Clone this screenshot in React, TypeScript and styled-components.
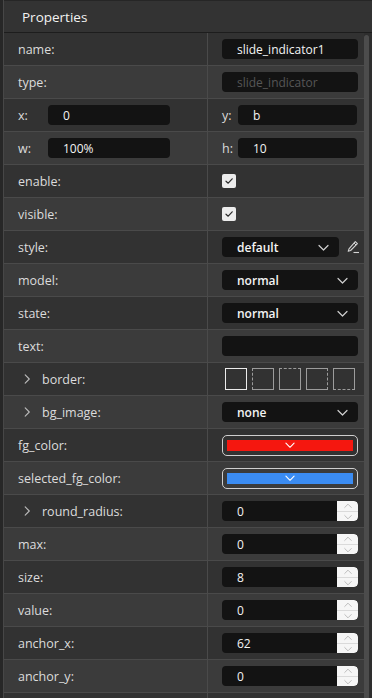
import React from 'react';
import styled, { createGlobalStyle, css } from 'styled-components';

const GlobalStyle = createGlobalStyle`
  html, body {
    margin: 0;
    padding: 0;
    background: #2a2a2a;
  }
  * { box-sizing: border-box; }
`;

const Shell = styled.div`
  display: flex;
  width: 372px;
  height: 698px;
  overflow: hidden;
  font-family: "Open Sans", "Noto Sans", sans-serif;
  font-size: 12.5px;
  color: #dcdcdc;
`;

const LeftEdge = styled.div`
  width: 4px;
  flex: none;
  background: #272727;
  border-right: 1px solid #474747;
`;

const Panel = styled.div`
  flex: 1;
  display: flex;
  flex-direction: column;
  min-width: 0;
`;

const Header = styled.div`
  height: 33px;
  flex: none;
  display: flex;
  align-items: center;
  padding-left: 18px;
  background: #333333;
  border-top: 1px solid #262626;
  border-bottom: 1px solid #1d1d1d;
  font-size: 13.5px;
  color: #f2f2f2;
`;

const Body = styled.div`
  flex: 1;
  display: flex;
  min-height: 0;
`;

const Rows = styled.div`
  flex: 1;
  display: flex;
  flex-direction: column;
`;

const ScrollTrack = styled.div`
  width: 8px;
  flex: none;
  background: #2e2e2e;
  padding: 2px 3px 0 0;
`;

const ScrollThumb = styled.div`
  height: 100%;
  background: #4c4c4c;
  border-radius: 3px 3px 0 0;
`;

const Row = styled.div<{ $alt: boolean }>`
  height: 33px;
  flex: none;
  display: grid;
  grid-template-columns: 204px 1fr;
  background: ${({ $alt }) => ($alt ? '#3b3b3b' : '#323232')};
  border-bottom: 1px solid #4a4a4a;
`;

const LabelCell = styled.div<{ $indent?: boolean }>`
  display: flex;
  align-items: center;
  gap: 0;
  padding-left: ${({ $indent }) => ($indent ? '18px' : '14px')};
  border-right: 1px solid #4a4a4a;
  white-space: nowrap;
`;

const ValueCell = styled.div`
  display: flex;
  align-items: center;
  padding-left: 14px;
`;

const Caret = styled.span`
  display: inline-flex;
  width: 20px;
  color: #bdbdbd;
`;

const InlineLabel = styled.span<{ $w: number }>`
  width: ${({ $w }) => $w}px;
  flex: none;
`;

const inputBox = css`
  height: 20px;
  border-radius: 4px;
  background: #131313;
  display: flex;
  align-items: center;
`;

const TextInput = styled.div<{ $w?: number; $dim?: boolean }>`
  ${inputBox};
  width: ${({ $w }) => ($w ? `${$w}px` : '136px')};
  padding-left: 15px;
  color: ${({ $dim }) => ($dim ? '#565656' : '#f4f4f4')};
  font-size: 12px;
`;

const Select = styled.div<{ $w?: number }>`
  ${inputBox};
  width: ${({ $w }) => ($w ? `${$w}px` : '136px')};
  padding: 0 10px 0 15px;
  justify-content: space-between;
  color: #f4f4f4;
  font-size: 12px;
  font-weight: 600;
`;

const IconButton = styled.span`
  display: inline-flex;
  margin-left: 7px;
  color: #d0d0d0;
`;

const Checkbox = styled.span`
  width: 14px;
  height: 14px;
  border-radius: 2px;
  background: #ececec;
  display: inline-flex;
  align-items: center;
  justify-content: center;
`;

const BorderBoxes = styled.div`
  display: flex;
  gap: 5px;
  margin-left: 3px;
`;

const BorderBox = styled.span<{ $side?: 'left' | 'top' | 'right' | 'bottom'; $active?: boolean }>`
  width: 22px;
  height: 22px;
  border: ${({ $active }) => ($active ? '1.5px solid #ececec' : '1px solid #9c9c9c')};
  ${({ $side }) => $side && `border-${$side}-style: dashed;`}
`;

const ColorButton = styled.div`
  width: 136px;
  height: 21px;
  border: 1px solid #cfcfcf;
  border-radius: 5px;
  padding: 4px;
  display: flex;
`;

const Swatch = styled.div<{ $color: string }>`
  flex: 1;
  background: ${({ $color }) => $color};
  display: flex;
  align-items: center;
  justify-content: center;
`;

const Spin = styled.div`
  ${inputBox};
  width: 136px;
  overflow: hidden;
`;

const SpinValue = styled.span`
  flex: 1;
  padding-left: 15px;
  color: #f4f4f4;
  font-size: 12px;
`;

const SpinButtons = styled.div`
  width: 21px;
  height: 100%;
  background: #f6f6f6;
  display: flex;
  flex-direction: column;
  align-items: center;
  justify-content: center;
  border-radius: 0 4px 4px 0;
  gap: 1px;
`;

const SpinDivider = styled.span`
  width: 100%;
  height: 1px;
  background: #dadada;
`;

function Chevron({ dir = 'down', size = 11, color = '#cfcfcf', sw = 1.2 }: { dir?: 'down' | 'up' | 'right'; size?: number; color?: string; sw?: number }) {
  const d = dir === 'down' ? 'M1 3.5 L5.5 8 L10 3.5' : dir === 'up' ? 'M1 7.5 L5.5 3 L10 7.5' : 'M3.5 1 L8 5.5 L3.5 10';
  return (
    <svg width={size} height={size} viewBox="0 0 11 11" fill="none">
      <path d={d} stroke={color} strokeWidth={sw} strokeLinecap="round" strokeLinejoin="round" />
    </svg>
  );
}

function Check() {
  return (
    <svg width="10" height="10" viewBox="0 0 10 10" fill="none">
      <path d="M2 5.2 L4.2 7.2 L8.2 2.8" stroke="#2a2a2a" strokeWidth="1.2" strokeLinecap="round" strokeLinejoin="round" />
    </svg>
  );
}

function Pencil() {
  return (
    <svg width="14" height="14" viewBox="0 0 14 14" fill="none">
      <path d="M9.3 1.6 L11.4 3.7 L4.6 10.5 L2.2 11.3 L3 8.9 Z" stroke="#d4d4d4" strokeWidth="1.1" strokeLinejoin="round" />
      <path d="M8 3 L10 5" stroke="#d4d4d4" strokeWidth="1" />
      <path d="M7.5 12.5 H13" stroke="#d4d4d4" strokeWidth="1.1" />
    </svg>
  );
}

function Spinner({ value }: { value: string }) {
  return (
    <Spin>
      <SpinValue>{value}</SpinValue>
      <SpinButtons>
        <Chevron dir="up" size={8} color="#a8a8a8" sw={1} />
        <SpinDivider />
        <Chevron dir="down" size={8} color="#a8a8a8" sw={1} />
      </SpinButtons>
    </Spin>
  );
}

type Prop = {
  label: string;
  expandable?: boolean;
  value: React.ReactNode;
};

const props: Prop[] = [
  { label: 'name:', value: <TextInput>slide_indicator1</TextInput> },
  { label: 'type:', value: <TextInput $dim>slide_indicator</TextInput> },
  { label: 'enable:', value: <Checkbox><Check /></Checkbox> },
  { label: 'visible:', value: <Checkbox><Check /></Checkbox> },
  {
    label: 'style:',
    value: (
      <>
        <Select $w={117}>default<Chevron /></Select>
        <IconButton><Pencil /></IconButton>
      </>
    ),
  },
  { label: 'model:', value: <Select>normal<Chevron /></Select> },
  { label: 'state:', value: <Select>normal<Chevron /></Select> },
  { label: 'text:', value: <TextInput /> },
  {
    label: 'border:',
    expandable: true,
    value: (
      <BorderBoxes>
        <BorderBox $active />
        <BorderBox $side="left" />
        <BorderBox $side="top" />
        <BorderBox $side="right" />
        <BorderBox $side="bottom" />
      </BorderBoxes>
    ),
  },
  { label: 'bg_image:', expandable: true, value: <Select>none<Chevron /></Select> },
  { label: 'fg_color:', value: <ColorButton><Swatch $color="#f5170f"><Chevron size={10} color="#ffffff" /></Swatch></ColorButton> },
  { label: 'selected_fg_color:', value: <ColorButton><Swatch $color="#3b8cf2"><Chevron size={10} color="#ffffff" /></Swatch></ColorButton> },
  { label: 'round_radius:', expandable: true, value: <Spinner value="0" /> },
  { label: 'max:', value: <Spinner value="0" /> },
  { label: 'size:', value: <Spinner value="8" /> },
  { label: 'value:', value: <Spinner value="0" /> },
  { label: 'anchor_x:', value: <Spinner value="62" /> },
  { label: 'anchor_y:', value: <Spinner value="0" /> },
];

export default function App() {
  let i = 0;
  const next = () => i++ % 2 === 1;
  const rows: React.ReactNode[] = [];

  props.forEach((p, idx) => {
    if (idx === 2) {
      rows.push(
        <Row key="xy" $alt={next()}>
          <LabelCell><InlineLabel $w={30}>x:</InlineLabel><TextInput $w={122}>0</TextInput></LabelCell>
          <ValueCell><InlineLabel $w={16}>y:</InlineLabel><TextInput $w={119}>b</TextInput></ValueCell>
        </Row>,
        <Row key="wh" $alt={next()}>
          <LabelCell><InlineLabel $w={30}>w:</InlineLabel><TextInput $w={122}>100%</TextInput></LabelCell>
          <ValueCell><InlineLabel $w={16}>h:</InlineLabel><TextInput $w={119}>10</TextInput></ValueCell>
        </Row>
      );
    }
    rows.push(
      <Row key={p.label} $alt={next()}>
        <LabelCell $indent={p.expandable}>
          {p.expandable && <Caret><Chevron dir="right" size={10} color="#bdbdbd" /></Caret>}
          {p.label}
        </LabelCell>
        <ValueCell>{p.value}</ValueCell>
      </Row>
    );
  });
  rows.push(
    <Row key="more" $alt={next()}>
      <LabelCell />
      <ValueCell />
    </Row>
  );

  return (
    <>
      <GlobalStyle />
      <Shell>
        <LeftEdge />
        <Panel>
          <Header>Properties</Header>
          <Body>
            <Rows>{rows}</Rows>
            <ScrollTrack><ScrollThumb /></ScrollTrack>
          </Body>
        </Panel>
      </Shell>
    </>
  );
}
